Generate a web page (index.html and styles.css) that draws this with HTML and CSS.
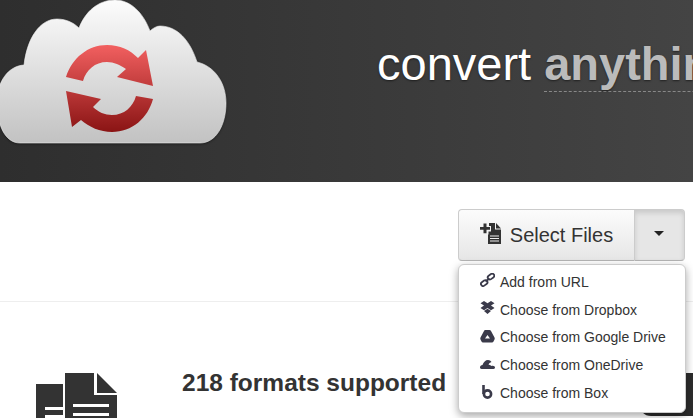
FILE: index.html
```html
<!DOCTYPE html>
<html lang="en">
<head>
<meta charset="UTF-8">
<meta name="viewport" content="width=device-width, initial-scale=1.0">
<title>Convert anything</title>
<link rel="stylesheet" href="styles.css">
</head>
<body>
<header class="hero">
<svg class="logo" width="232" height="150" viewBox="-3 0 232 150">
<defs>
<linearGradient id="cloudFill" gradientUnits="userSpaceOnUse" x1="0" y1="0" x2="0" y2="143">
<stop offset="0" stop-color="#fcfcfc"/>
<stop offset="1" stop-color="#c2c2c2"/>
</linearGradient>
<linearGradient id="arrowFill" gradientUnits="userSpaceOnUse" x1="0" y1="45" x2="0" y2="132">
<stop offset="0" stop-color="#f26060"/>
<stop offset="1" stop-color="#8a1414"/>
</linearGradient>
</defs>
<path fill="url(#cloudFill)" stroke="#efefef" stroke-width="0.6" d="M20 143 H200 C216 143 226 125 226 103 C226 82 214 66 197 62 C190 40 177 26 160 26 C157 26 153 28 150 31 C143 12 130 0 115 0 C98 0 85 12 79 28 C73 22 65 19 57 19 C40 19 27 38 24 65 C8 66 -3 82 -3 102 C-3 125 5 143 20 143Z"/>
<path fill="url(#arrowFill)" d="M66 77 C72 58 88 45 107 45 C120 45 130 50 138 58 L146 50 L153 86 L117 77 L126 69 C120 65 114 62 107 62 C95 62 86 70 83 81Z"/>
<path fill="url(#arrowFill)" d="M153 99 C148 118 132 132 112 132 C100 132 89 127 81 120 L72 127 L66 91 L101 99 L93 107 C98 112 105 115 112 115 C124 115 133 107 136 96Z"/>
</svg>
<h1 class="headline">convert <span class="headline-em">anything</span></h1>
</header>

<div class="toolbar">
<div class="btn-group">
<button type="button" class="select-btn">
<svg class="select-icon" width="22" height="22" viewBox="0 0 22 22">
<path fill="#333" d="M0 4h3.500V0.500h3V4H10v2.800H6.500v3.500h-3V6.800H0z"/>
<path fill="#333" d="M9 0h6v6.500h6V21H8V11.500h0.500V8.500H11V3H9z"/>
<path fill="#333" d="M16 0l5 5.500h-5z"/>
<path fill="#eee" d="M10 12.500h9v1h-9zM10 15h9v1h-9zM10 17.500h9v1h-9z"/>
</svg>
Select Files
</button>
<button type="button" class="caret-btn"><span class="caret"></span></button>
</div>
<ul class="menu">
<li class="menu-item">
<svg class="menu-icon" width="15" height="14" viewBox="0 0 15 14"><g fill="none" stroke="#3a3a4a" stroke-width="1.800"><rect x="7.500" y="1.500" width="7" height="4.200" rx="2.100" transform="rotate(-35 11 3.600)"/><rect x="0.700" y="8" width="7" height="4.200" rx="2.100" transform="rotate(-35 4.200 10.100)"/><path d="M5.500 8.500l4-3"/></g></svg>
Add from URL
</li>
<li class="menu-item">
<svg class="menu-icon" width="15" height="14" viewBox="0 0 15 14"><path fill="#3a3a4a" d="M4 0l3.500 2.300L11 0l3.500 2.300L11 4.600l3.500 2.300L11 9.200 7.500 6.900 4 9.200.5 6.900 4 4.600.5 2.300zM4 10l3.500-2.200L11 10l-3.500 3z"/></svg>
Choose from Dropbox
</li>
<li class="menu-item">
<svg class="menu-icon" width="15" height="14" viewBox="0 0 15 14"><path fill="#3a3a4a" d="M5 1h4.500q1 0 1.500 1l3.500 6.500q.5 1 0 2l-1 2q-.5 1-1.500 1H3q-1 0-1.500-1l-1-2q-.5-1 0-2L4 2q.5-1 1-1zM5 9.500h5L7.500 6z"/></svg>
Choose from Google Drive
</li>
<li class="menu-item">
<svg class="menu-icon" width="15" height="14" viewBox="0 0 15 14"><path fill="#3a3a4a" d="M0 10.500c0-1.500 1-2.500 2.500-2.500C3.500 5 5.500 3 8 3c1.500 0 2.800.8 3.500 2C10 5.500 9 6.500 8.500 7.500 10 8 11 8.500 11.500 9c1.500-.8 3.500 0 3.500 1.500 0 .7-.5 1.500-1.500 1.500h-12C.5 12 0 11.200 0 10.500z"/></svg>
Choose from OneDrive
</li>
<li class="menu-item">
<svg class="menu-icon" width="15" height="14" viewBox="0 0 15 14"><path fill="none" stroke="#3a3a4a" stroke-width="2.600" d="M3.500 0v9"/><circle cx="7.500" cy="9" r="3.600" fill="none" stroke="#3a3a4a" stroke-width="2.600"/></svg>
Choose from Box
</li>
</ul>
</div>

<section class="features">
<svg class="features-icon" width="82" height="60" viewBox="0 0 82 60">
<path fill="#333" d="M0 11h27v49H0z"/>
<path fill="#333" d="M29 0h29v22h23v38H29z"/>
<path fill="#333" d="M61 0l20 20H61z"/>
<path fill="#fff" d="M9 34h18v3H9zM9 42h18v3H9zM37 31h36v3H37zM37 40h36v3H37z"/>
</svg>
<h2 class="features-title">218 formats supported</h2>
<div class="chat-tab"></div>
</section>
</body>
</html>
```

FILE: styles.css
```css
* {
margin: 0;
padding: 0;
box-sizing: border-box;
}
body {
font-family: 'Liberation Sans', Arial, sans-serif;
background-color: #fff;
color: #333;
height: 418px;
overflow: hidden;
}
.hero {
height: 182px;
display: flex;
background: linear-gradient(to right, #2e2e2e, #444);
overflow: hidden;
}
.logo {
flex: none;
margin-left: -3px;
filter: drop-shadow(0 1px 1px rgba(0, 0, 0, 0.4));
}
.headline {
margin-left: 148px;
margin-top: 36px;
font-size: 47px;
line-height: 56px;
font-weight: normal;
color: #fff;
white-space: nowrap;
text-shadow: 0 1px 2px rgba(0, 0, 0, 0.5);
}
.headline-em {
display: inline-block;
font-weight: bold;
color: #bbb;
line-height: 54px;
border-bottom: 1px dashed #888;
}
.toolbar {
position: relative;
height: 120px;
padding: 27px 8px 0 0;
display: flex;
justify-content: flex-end;
border-bottom: 1px solid #eee;
}
.btn-group {
display: flex;
height: 52px;
}
.select-btn,
.caret-btn {
font-family: inherit;
border: 1px solid #ccc;
border-bottom-color: #b4b4b4;
color: #333;
}
.select-btn {
width: 176px;
display: flex;
align-items: center;
justify-content: center;
gap: 8px;
font-size: 20px;
background: linear-gradient(to bottom, #fcfcfc, #e6e6e6);
border-radius: 4px 0 0 4px;
border-right: 0;
}
.select-icon {
margin-top: -3px;
}
.caret-btn {
width: 51px;
padding-right: 2px;
display: flex;
align-items: center;
justify-content: center;
background: #e6e6e6;
border-radius: 0 4px 4px 0;
box-shadow: inset 0 3px 5px rgba(0, 0, 0, 0.125);
}
.caret {
border-top: 5px solid #222;
border-left: 5px solid transparent;
border-right: 5px solid transparent;
margin-bottom: 4px;
}
.menu {
position: absolute;
z-index: 2;
top: 82px;
right: 7px;
width: 228px;
height: 149px;
padding: 3px 0;
list-style: none;
background: #fff;
border: 1px solid #ccc;
border-radius: 6px;
box-shadow: 0 3px 8px rgba(0, 0, 0, 0.35);
}
.menu-item {
height: 27.8px;
padding-left: 21px;
display: flex;
align-items: center;
gap: 5px;
font-size: 14px;
color: #333;
}
.menu-icon {
flex: none;
margin-top: -3px;
}
.features {
position: relative;
display: flex;
padding: 71px 0 0 36px;
}
.features-icon {
flex: none;
}
.features-title {
margin-left: 64px;
margin-top: -3px;
font-size: 24.5px;
line-height: 26px;
color: #333;
white-space: nowrap;
}
.chat-tab {
position: absolute;
top: 71px;
right: 0;
width: 54px;
height: 43px;
background: #2c2c2c;
border-radius: 12px 0 0 12px;
}
```
